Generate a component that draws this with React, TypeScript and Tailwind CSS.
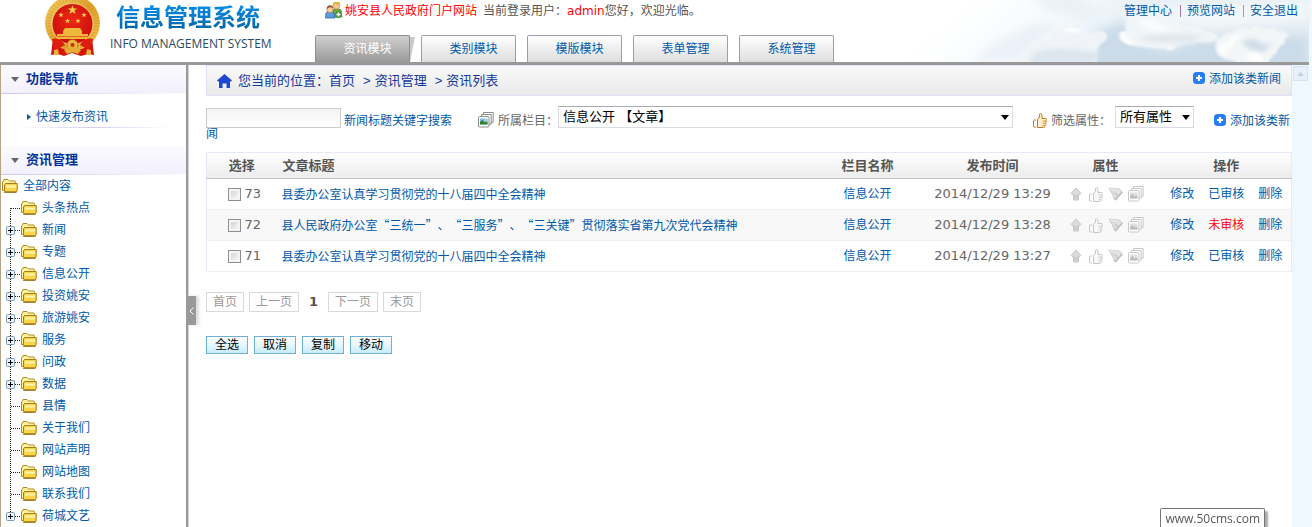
import { useState } from 'react';

interface TreeItem {
  label: string;
  expandable: boolean;
}

interface Article {
  id: number;
  title: string;
  category: string;
  time: string;
  approved: boolean;
}

const tabs = ['资讯模块', '类别模块', '模版模块', '表单管理', '系统管理'];

const tree: TreeItem[] = [
  { label: '头条热点', expandable: false },
  { label: '新闻', expandable: true },
  { label: '专题', expandable: true },
  { label: '信息公开', expandable: true },
  { label: '投资姚安', expandable: true },
  { label: '旅游姚安', expandable: true },
  { label: '服务', expandable: true },
  { label: '问政', expandable: true },
  { label: '数据', expandable: true },
  { label: '县情', expandable: false },
  { label: '关于我们', expandable: false },
  { label: '网站声明', expandable: false },
  { label: '网站地图', expandable: false },
  { label: '联系我们', expandable: false },
  { label: '荷城文艺', expandable: true },
];

const articles: Article[] = [
  { id: 73, title: '县委办公室认真学习贯彻党的十八届四中全会精神', category: '信息公开', time: '2014/12/29 13:29', approved: true },
  { id: 72, title: '县人民政府办公室“三统一”、“三服务”、“三关键”贯彻落实省第九次党代会精神', category: '信息公开', time: '2014/12/29 13:28', approved: false },
  { id: 71, title: '县委办公室认真学习贯彻党的十八届四中全会精神', category: '信息公开', time: '2014/12/29 13:27', approved: true },
];

const STAR = '0,-1 .24,-.32 .95,-.31 .38,.12 .59,.81 0,.4 -.59,.81 -.38,.12 -.95,-.31 -.24,-.32';

function Emblem() {
  return (
    <svg width="58" height="58" viewBox="0 0 58 58" className="shrink-0">
      <defs>
        <linearGradient id="gold" x1="0" y1="0" x2="1" y2="1">
          <stop offset="0" stopColor="#f6d46b" />
          <stop offset="0.5" stopColor="#dfa22b" />
          <stop offset="1" stopColor="#f2c54e" />
        </linearGradient>
        <radialGradient id="red" cx="0.5" cy="0.4" r="0.6">
          <stop offset="0" stopColor="#ee2a16" />
          <stop offset="1" stopColor="#c90d0a" />
        </radialGradient>
      </defs>
      <path d="M9 38 L7 55 Q14 53 20 56 L28 53 L37 56 Q44 53 50 55 L48 38Z" fill="#d8150d" />
      <circle cx="28.500" cy="23" r="27.500" fill="url(#gold)" />
      <circle cx="28.500" cy="23" r="24" fill="none" stroke="#b97a17" strokeWidth="5" strokeDasharray="1 2.200" opacity="0.3" />
      <circle cx="28.500" cy="24" r="20.500" fill="url(#red)" stroke="#f7df86" strokeWidth="0.800" />
      <polygon points={STAR} transform="translate(28.500 10) scale(5)" fill="#f3cf4c" />
      <polygon points={STAR} transform="translate(17 15) scale(2.800)" fill="#f3cf4c" />
      <polygon points={STAR} transform="translate(40 15) scale(2.800)" fill="#f3cf4c" />
      <polygon points={STAR} transform="translate(23.500 21) scale(2.800)" fill="#f3cf4c" />
      <polygon points={STAR} transform="translate(34 21) scale(2.800)" fill="#f3cf4c" />
      <path d="M21 28h15l2 3h-19zM19 31h19v3h-19zM13 34h31v2.500h-31zM12 37h33v2h-33z" fill="#edb83c" />
      <path d="M8 39 Q17 37 21 45 L14 49 Q9 47 8 39M49 39 Q40 37 36 45 L43 49 Q48 47 49 39" fill="#dd1d10" />
      <circle cx="28.500" cy="45" r="5.500" fill="#ebb63d" stroke="#a9690f" strokeWidth="1" strokeDasharray="2 1" />
      <circle cx="28.500" cy="45" r="2" fill="#d7260f" />
      <path d="M20 50 Q28.500 45 37 50 L34 54 Q28.500 51 23 54Z" fill="#e7ae37" />
      <path d="M10 50l4-1 1 6-5 0zM47 50l-4-1-1 6 5 0z" fill="#e9b23c" />
    </svg>
  );
}

function Clouds() {
  return (
    <svg className="absolute right-0 top-0 h-full w-[430px]" viewBox="0 0 430 62" preserveAspectRatio="none" aria-hidden="true">
      <defs>
        <linearGradient id="sky" gradientUnits="userSpaceOnUse" x1="90" y1="0" x2="170" y2="90">
          <stop offset="0" stopColor="#ffffff" />
          <stop offset="0.600" stopColor="#f5fafd" />
          <stop offset="1" stopColor="#e6eff6" />
        </linearGradient>
        <filter id="soft" x="-20%" y="-50%" width="140%" height="200%"><feGaussianBlur stdDeviation="5" /></filter>
        <filter id="edge"><feGaussianBlur stdDeviation="1" /></filter>
        <filter id="haze"><feGaussianBlur stdDeviation="2.500" /></filter>
      </defs>
      <rect width="430" height="62" fill="url(#sky)" />
      <g filter="url(#soft)">
        <path d="M150 -5L200 -5L225 20L170 12Z" fill="#e9f1f7" />
        <path d="M205 62L218 32L245 22L262 45L290 50L330 38L430 30L430 70L205 70Z" fill="#cbdbe9" />
        <path d="M140 60L165 36L185 26L160 22L120 40L95 62Z" fill="#ebf1f8" />
        <path d="M235 8L430 0L430 22L330 28L250 16Z" fill="#f2f7f9" />
        <path d="M320 30L430 24L430 36L330 38Z" fill="#e2eaf0" />
      </g>
      <path filter="url(#edge)" d="M132 66Q130 58 138 57Q140 51 149 52Q152 43 161 41Q167 38 172 39Q173 31 182 29Q186 23 194 25Q202 24 206 30Q210 36 216 32Q225 29 228 35Q229 41 221 44Q216 52 218 66Z" fill="#f0f4f8" />
      <path filter="url(#edge)" d="M240 35Q240 31 247 31Q245 22 250 16Q262 9 273 17Q280 13 290 20Q300 21 304 27Q318 24 324 31Q335 30 340 38Q334 44 320 42Q306 42 300 45Q294 50 288 48Q278 49 268 47Q252 47 244 42Q240 40 240 35Z" fill="#f1f5f8" />
      <path filter="url(#edge)" d="M337 46Q335 39 343 37Q348 31 356 32Q361 25 370 29Q378 24 386 29Q394 26 399 31Q409 31 410 36Q404 39 406 43Q398 48 397 54Q390 57 389 66L362 66Q356 60 346 59Q335 55 337 46Z" fill="#f3f6f7" />
      <path filter="url(#edge)" d="M286 49Q290 44 296 48L293 50Z" fill="#f8fafb" />
      <g filter="url(#haze)">
        <path d="M155 52Q175 46 200 50T222 46L216 64L150 64Z" fill="#dde6ef" />
        <path d="M262 37Q285 31 325 36L315 41Q285 45 262 40Z" fill="#dfe7ee" />
        <path d="M362 42Q372 36 380 42T398 40L384 52Q370 51 362 42Z" fill="#cfdce6" />
        <path d="M258 20Q270 16 282 24T305 31L272 32Z" fill="#fbfcfd" />
      </g>
      <g filter="url(#edge)" fill="#fcfdfd">
        <path d="M183 32Q187 26 195 28Q203 28 201 34Q193 31 183 32Z" />
        <path d="M241 33Q247 31 248 37Q254 44 259 43Q249 47 243 40Z" />
        <path d="M339 48Q343 42 350 41Q354 33 363 34Q355 40 354 47Q347 50 346 56Q340 54 339 48Z" />
        <path d="M368 54Q374 50 380 54Q386 56 383 62L372 62Q367 59 368 54Z" />
      </g>
    </svg>
  );
}

function UsersIcon() {
  return (
    <svg width="18" height="17" viewBox="0 0 18 17" className="shrink-0">
      <path d="M8 8q4-3 8 0l.8 7h-8z" fill="#6cae3e" stroke="#41822a" strokeWidth="0.800" />
      <circle cx="11.500" cy="3.500" r="3.500" fill="#f5c893" stroke="#c78a3c" strokeWidth="0.600" />
      <path d="M8 3q0-4 4-3.500 3 0 3 3-4 0-4.500-1-1 1.500-2.500 1.500" fill="#e5ad42" />
      <path d="M1 11q4-4 8 0l1 5H.5z" fill="#5e9bdd" stroke="#3467ac" strokeWidth="0.800" />
      <circle cx="5" cy="7.500" r="3.200" fill="#f6cfa5" stroke="#a66535" strokeWidth="0.600" />
      <path d="M1.800 7q0-4 3.400-3.700 3 0 3 3.700-1-1.800-2.600-1.800T1.800 7" fill="#9c5526" />
      <circle cx="13.500" cy="12.500" r="3.400" fill="#3f9a35" />
      <path d="M13.500 10.500v4M11.500 12.500h4" stroke="#fff" strokeWidth="1.400" />
    </svg>
  );
}

function Folder() {
  return (
    <svg width="16" height="14" viewBox="0 0 16 14" className="shrink-0">
      <path d="M.5 11.500V3l1-1 .5-1.500h4L7.500 2H13l.5 1.500v8z" fill="#fdf3a4" stroke="#b78a18" />
      <path d="M3.500 4.500h11.700v7l-1 1.500H3.500l-1-1.500V6z" fill="#f8d64e" stroke="#a77c10" />
      <path d="M4 7.500h10" stroke="#fff6b5" strokeWidth="2" />
      <path d="M2 13.200h12.500" stroke="#8c6505" />
    </svg>
  );
}

function PlusBadge() {
  return (
    <svg width="12" height="12" viewBox="0 0 12 12" className="mr-1 inline-block align-[-1px]">
      <rect width="12" height="12" rx="3.500" fill="#2a7df5" />
      <path d="M6 3v6M3 6h6" stroke="#fff" strokeWidth="2" />
    </svg>
  );
}

function Thumb({ stroke, fill }: { stroke: string; fill: string }) {
  return (
    <svg width="14" height="15" viewBox="0 0 14 15" className="shrink-0">
      <path d="M4.500 6.500L6.500 4V1.500q0-1 1-1T9 2v3.500h3.500q1 0 1 1t-1 1.300q1 .3.800 1.300t-1 1.200q.8.400.5 1.300t-1 1q.4 1.900-1.300 1.900H4.500z" fill={fill} stroke={stroke} />
      <path d="M9.500 8h3M9.500 10.200h2.700M9.500 12.400h2" stroke={stroke} strokeWidth="0.800" />
      <path d="M3 7H1.500Q.5 7 .5 8v5q0 1 1 1H3" fill="none" stroke={stroke} />
    </svg>
  );
}

function Photos({ color }: { color?: boolean }) {
  const line = color ? '#8b8b8b' : '#c8c8c8';
  return (
    <svg width="16" height="16" viewBox="0 0 16 16" className="shrink-0">
      <path d="M5.500 3V.5h9.700v9.700H13" fill="#fff" stroke={line} />
      <path d="M3.500 5V2.500h9.700v9.700H11" fill="#fff" stroke={line} />
      <rect x="0.500" y="4.500" width="10.500" height="10.500" rx="1" fill="#fff" stroke={line} />
      <rect x="2" y="6.500" width="7.500" height="6" fill={color ? '#7db8e8' : '#e0e0e0'} />
      <path d="M2 12.500V10l2.500-2 2 2.500 3-1v3z" fill={color ? '#34802f' : '#bebebe'} />
      {color && <circle cx="7.500" cy="8" r="1" fill="#f4e051" />}
    </svg>
  );
}

function AttributeIcons() {
  return (
    <div className="flex items-center justify-center gap-1">
      <svg width="16" height="15" viewBox="0 0 16 15">
        <path d="M8 1l5 5.500-1 1h-1.500V13h-5V7.500H4l-1-1z" fill="#dcdcdc" stroke="#c6c6c6" />
        <path d="M6 9h4M6 11h4" stroke="#c0c0c0" />
      </svg>
      <span className="flex w-4 justify-center"><Thumb stroke="#c6c6c6" fill="#f8f8f8" /></span>
      <svg width="16" height="15" viewBox="0 0 16 15">
        <path d="M1 1.500q2-1 4 0l6 .5q2 .5 2.500 3L8 13l-2-1-1-4z" fill="#dcdcdc" stroke="#cfcfcf" />
        <path d="M2 2l8 1.500 1 3" fill="none" stroke="#f2f2f2" />
        <path d="M14.500 5L7 13" stroke="#bdbdbd" strokeWidth="1.500" />
        <path d="M7 6l3 3" stroke="#c2c2c2" />
      </svg>
      <Photos />
    </div>
  );
}

function Header() {
  const [active, setActive] = useState(0);

  return (
    <header className="relative mr-[3px] h-[65px] border-b-[3px] border-[#999] bg-white">
      <Clouds />
      <div className="relative flex h-full">
        <div className="flex w-[315px] shrink-0 pl-11">
          <Emblem />
          <div className="pl-2">
            <h1 className="bg-linear-to-b from-[#0694f5] to-[#0563a3] bg-clip-text pl-[6px] pt-1 text-2xl leading-7 font-bold text-transparent">信息管理系统</h1>
            <p className="pt-1 text-xs leading-4 font-medium whitespace-nowrap text-[#2c4a63] [font-family:'Open_Sans',sans-serif]">INFO MANAGEMENT SYSTEM</p>
          </div>
        </div>
        <div className="flex flex-1 flex-col justify-between">
          <div className="flex h-[21px] items-center pl-[10px] text-[#555]">
            <UsersIcon />
            <a href="#" className="ml-[2px] text-[#f00]">姚安县人民政府门户网站</a>
            <span className="ml-[6px]">当前登录用户：</span>
            <span className="text-[#f00]">admin</span>
            <span>您好，欢迎光临。</span>
          </div>
          <nav className="flex gap-[11px]">
            {tabs.map((tab, index) => (
              <button
                key={tab}
                type="button"
                onClick={() => setActive(index)}
                className={
                  index === active
                    ? 'relative h-[27px] w-[95px] rounded-t-xs border border-b-0 border-[#8f8f8f] bg-linear-to-b from-[#d0d0d0] to-[#999] pl-[10px] text-white'
                    : 'h-[27px] w-[95px] rounded-t-xs border border-b-0 border-[#9aa0ab] bg-linear-to-b from-white to-[#dedede] pl-[10px] text-[#0059a9]'
                }
              >
                {tab}
                {index === active && (
                  <svg className="absolute top-0 left-full" width="6" height="26" viewBox="0 0 6 26">
                    <path d="M1 1h5L1 26z" fill="#c9c9c9" />
                  </svg>
                )}
              </button>
            ))}
          </nav>
        </div>
        <div className="flex h-[21px] items-center pr-[11px] text-[#0059a9]">
          <a href="#" className="pr-2">管理中心</a>
          <a href="#" className="border-l border-[#a078a8] pr-2 pl-[6px] leading-3">预览网站</a>
          <a href="#" className="border-l border-[#8fa98f] pl-[6px] leading-3">安全退出</a>
        </div>
      </div>
    </header>
  );
}

function SectionTitle({ children }: { children: string }) {
  return (
    <div className="bg-linear-to-r from-[#cfc5f2] via-[#e6e0f8] to-white pb-px">
      <h2 className="flex h-7 items-center bg-linear-to-b from-[#fbfbfe] to-[#f3f0fc] pl-[10px] text-[13px] font-bold text-[#003399]">
        <svg width="8" height="5" viewBox="0 0 8 5" className="mr-[7px]">
          <path d="M0 0h8L4 5z" fill="#666" />
        </svg>
        {children}
      </h2>
    </div>
  );
}

function Sidebar() {
  return (
    <aside className="w-[186px] shrink-0 border-l border-[#b9a386] bg-white text-[#0059a9]">
      <SectionTitle>功能导航</SectionTitle>
      <div className="px-4 pt-[13px] pb-[18px]">
        <a href="#" className="flex h-5 items-center pl-[10px]">
          <svg width="4" height="6" viewBox="0 0 4 6" className="mr-[5px]">
            <path d="M0 0l4 3-4 3z" fill="#0059a9" />
          </svg>
          快速发布资讯
        </a>
        <div className="h-px bg-linear-to-r from-white via-[#d5ccf3] to-white" />
      </div>
      <SectionTitle>资讯管理</SectionTitle>
      <a href="#" className="flex h-[22px] items-center gap-[5px] pl-px">
        <Folder />
        全部内容
      </a>
      <ul>
        {tree.map((item, index) => (
          <li key={item.label} className="flex h-[22px] items-center">
            <svg width="20" height="22" viewBox="0 0 20 22" className="shrink-0">
              <path d={index === 0 ? 'M9.500 11v11' : index === tree.length - 1 ? 'M9.500 0v11' : 'M9.500 0v22'} stroke="#222" strokeDasharray="1 1" />
              <path d="M10 11.500h9" stroke="#222" strokeDasharray="1 1" />
              {item.expandable && (
                <>
                  <rect x="5.500" y="7.500" width="8" height="8" rx="1" fill="#eef0f2" stroke="#7898b5" />
                  <path d="M7 11.500h5M9.500 9v5" stroke="#000" />
                </>
              )}
            </svg>
            <Folder />
            <a href="#" className="ml-[5px]">{item.label}</a>
          </li>
        ))}
      </ul>
    </aside>
  );
}

function Dropdown({ label, options, className }: { label: string; options: string[]; className: string }) {
  return (
    <span className={`relative inline-block ${className}`}>
      <select aria-label={label} className="block h-[22px] w-full appearance-none border border-[#dadce4] border-t-[#a9abb2] bg-white pl-1 text-[13px] leading-5 text-black">
        {options.map((option) => (
          <option key={option}>{option}</option>
        ))}
      </select>
      <svg className="pointer-events-none absolute top-[9px] right-1" width="8" height="5" viewBox="0 0 8 5">
        <path d="M0 0h8L4 5z" fill="#000" />
      </svg>
    </span>
  );
}

function Filters() {
  return (
    <div className="pt-[10px] text-xs leading-[13px] text-[#666]">
      <span className="mr-[26px] inline-flex items-end align-bottom whitespace-nowrap">
        <input
          type="text"
          aria-label="新闻标题关键字搜索"
          className="mr-[3px] h-5 w-[135px] border border-[#ccc] bg-linear-to-b from-[#f3f3f3] to-white"
        />
        <a href="#" className="text-[#0059a9]">新闻标题关键字搜索</a>
      </span>
      <span className="mr-5 inline-flex items-end align-bottom whitespace-nowrap">
        <Photos color />
        <span className="ml-1">所属栏目：</span>
        <Dropdown label="所属栏目" options={['信息公开 【文章】']} className="w-[455px]" />
      </span>
      <span className="mr-5 inline-flex items-end align-bottom whitespace-nowrap">
        <Thumb stroke="#c67a1d" fill="#fff0cd" />
        <span className="mx-1">筛选属性：</span>
        <Dropdown label="筛选属性" options={['所有属性']} className="w-[79px]" />
      </span>
      <a href="#" className="text-[#0059a9]"><PlusBadge />添加该类新<wbr />闻</a>
    </div>
  );
}

function ArticleTable() {
  return (
    <table className="mt-[11px] w-full table-fixed border border-[#e8e8fa] text-center">
      <colgroup>
        <col className="w-[70px]" />
        <col />
        <col className="w-[120px]" />
        <col className="w-[130px]" />
        <col className="w-24" />
        <col className="w-[138px]" />
      </colgroup>
      <thead>
        <tr className="h-[26px] border-b border-[#c4c4c4] bg-linear-to-b from-white to-[#ececec] text-[13px] text-[#555]">
          <th>选择</th>
          <th className="pl-[6px] text-left">文章标题</th>
          <th>栏目名称</th>
          <th>发布时间</th>
          <th>属性</th>
          <th className="pl-2">操作</th>
        </tr>
      </thead>
      <tbody>
        {articles.map((article) => (
          <tr key={article.id} className="h-[31px] border-b border-[#efeff4] text-[#0059a9] even:bg-[#f8f8f8]">
            <td>
              <label className="flex items-center justify-center gap-[3px] pl-[6px] text-[13px] text-[#666]">
                <input type="checkbox" className="size-[13px] appearance-none border border-[#8e8f8f] bg-linear-to-br from-[#c8ccd2] to-white shadow-[inset_0_0_0_2px_#f4f4f4] checked:bg-[#0059a9]" />
                {article.id}
              </label>
            </td>
            <td className="pl-[5px] text-left [font-family:'Noto_Sans_CJK_SC',sans-serif] [text-spacing-trim:space-all]"><a href="#">{article.title}</a></td>
            <td><a href="#">{article.category}</a></td>
            <td className="text-[13px] whitespace-nowrap text-[#666]">{article.time}</td>
            <td><AttributeIcons /></td>
            <td>
              <div className="flex justify-center gap-[14px] pl-2">
                <a href="#">修改</a>
                <a href="#" className={article.approved ? '' : 'text-[#f00]'}>{article.approved ? '已审核' : '未审核'}</a>
                <a href="#">删除</a>
              </div>
            </td>
          </tr>
        ))}
      </tbody>
    </table>
  );
}

function PageButton({ children }: { children: string }) {
  return (
    <button type="button" disabled className="h-5 border border-[#d9d9d9] px-[6px] text-[#999]">{children}</button>
  );
}

export default function App() {
  const [collapsed, setCollapsed] = useState(false);

  return (
    <div lang="zh-CN" className="flex min-h-screen flex-col bg-[#eff7ff] text-xs leading-4 [font-family:'DejaVu_Sans','Noto_Sans_CJK_SC',sans-serif]">
      <Header />
      <div className="flex flex-1">
        {!collapsed && <Sidebar />}
        <div className="relative w-[3px] shrink-0 border-r border-[#d5d5dc] bg-[#999]">
          <button
            type="button"
            aria-label="收起侧栏"
            onClick={() => setCollapsed(!collapsed)}
            className="absolute top-[231px] left-0 flex h-[29px] w-[10px] items-center justify-center bg-[#999] shadow-[3px_0_3px_#ddd]"
          >
            <svg width="5" height="8" viewBox="0 0 5 8">
              <path d="M4.500.5L1 4l3.500 3.500" fill="none" stroke="#fff" />
            </svg>
          </button>
        </div>
        <main className="min-w-0 flex-1 bg-white pl-[17px]">
          <div className="flex h-[31px] items-center justify-between border border-[#e1e1fb] bg-linear-to-b from-[#fafafa] to-[#e9e9e9] pr-[10px] pl-[10px] text-[13px] text-[#14389c]">
            <div className="flex items-center">
              <svg width="15" height="14" viewBox="0 0 15 14" className="mr-[6px]">
                <path d="M7.500 0L15 6.500l-1 1h-1V14H9.500V9.500h-4V14H2V7.500H1l-1-1z" fill="#1d48d3" />
              </svg>
              <span>您当前的位置：</span>
              <a href="#">首页</a>
              <span className="pr-1 pl-2 [font-family:'Liberation_Sans',sans-serif]">&gt;</span>
              <a href="#">资讯管理</a>
              <span className="pr-1 pl-2 [font-family:'Liberation_Sans',sans-serif]">&gt;</span>
              <a href="#">资讯列表</a>
            </div>
            <a href="#" className="pb-1 text-xs text-[#0059a9]"><PlusBadge />添加该类新闻</a>
          </div>
          <Filters />
          <ArticleTable />
          <div className="mt-5 flex items-center gap-[5px]">
            <PageButton>首页</PageButton>
            <PageButton>上一页</PageButton>
            <span className="px-[5px] text-[13px] font-bold text-[#555]">1</span>
            <PageButton>下一页</PageButton>
            <PageButton>末页</PageButton>
          </div>
          <div className="mt-6 flex gap-[6px] text-black">
            {['全选', '取消', '复制', '移动'].map((action) => (
              <button key={action} type="button" className="h-[18px] w-[42px] border border-[#6eb0d6] bg-linear-to-b from-white to-[#c9ecfc] leading-4">
                {action}
              </button>
            ))}
          </div>
        </main>
        <div className="w-5 shrink-0 pt-px pl-px">
          <div className="flex h-[15px] w-[15px] items-center justify-center border border-[#d3e4f1] bg-[#e6f1fb]">
            <svg width="7" height="4" viewBox="0 0 7 4">
              <path d="M3.500 0L7 4H0z" fill="#c3d0db" />
            </svg>
          </div>
        </div>
      </div>
      <div className="fixed right-[47px] bottom-0 rounded-t-xs border border-b-0 border-[#767676] bg-white px-1 pt-[2px] text-xs leading-4 text-[#575757] shadow-[3px_3px_2px_#aaa] [font-family:'Open_Sans',sans-serif]">
        www.50cms.com
      </div>
    </div>
  );
}
